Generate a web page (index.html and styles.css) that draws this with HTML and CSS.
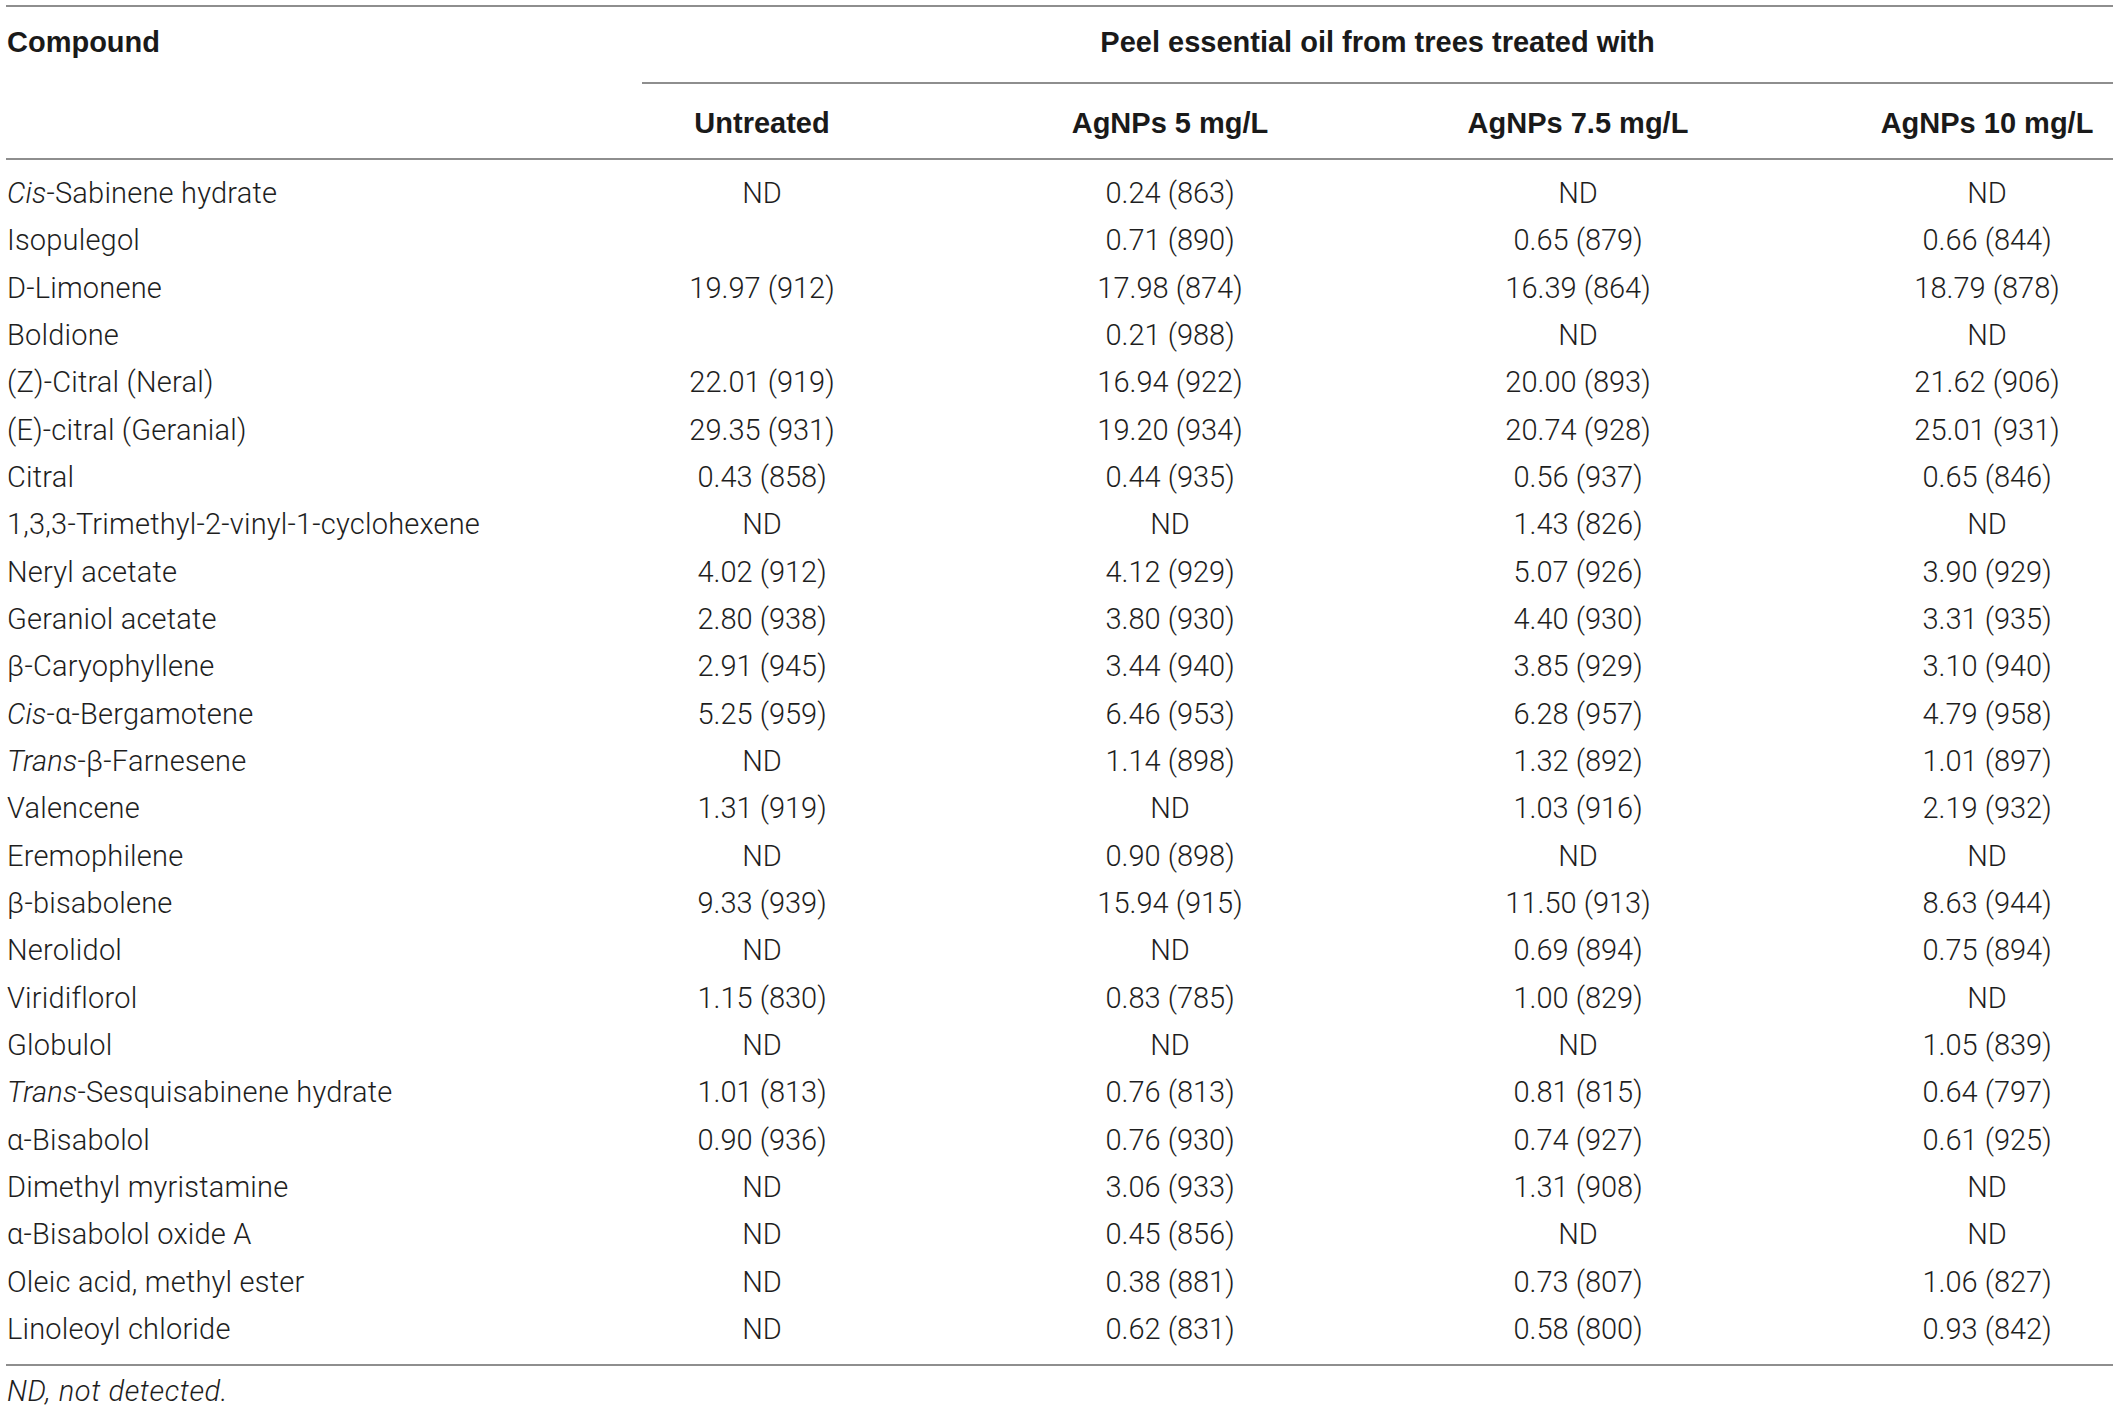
FILE: index.html
```html
<!DOCTYPE html>
<html lang="en">
<head>
<meta charset="utf-8">
<title>Peel essential oil composition</title>
<link rel="stylesheet" href="styles.css">
</head>
<body>
<div class="wrap">
<table class="data">
  <colgroup>
    <col class="c-name">
    <col class="c-val">
    <col class="c-val">
    <col class="c-val">
    <col class="c-last">
  </colgroup>
  <thead>
    <tr class="h1">
      <th class="name">Compound</th>
      <th colspan="4" class="span"><div class="span-title">Peel essential oil from trees treated with</div></th>
    </tr>
    <tr class="h2">
      <th class="name"></th>
      <th>Untreated</th>
      <th>AgNPs 5 mg/L</th>
      <th>AgNPs 7.5 mg/L</th>
      <th class="last">AgNPs 10 mg/L</th>
    </tr>
  </thead>
  <tbody>
    <tr><td class="name"><i>Cis</i>-Sabinene hydrate</td><td>ND</td><td>0.24 (863)</td><td>ND</td><td class="last">ND</td></tr>
    <tr><td class="name">Isopulegol</td><td></td><td>0.71 (890)</td><td>0.65 (879)</td><td class="last">0.66 (844)</td></tr>
    <tr><td class="name">D-Limonene</td><td>19.97 (912)</td><td>17.98 (874)</td><td>16.39 (864)</td><td class="last">18.79 (878)</td></tr>
    <tr><td class="name">Boldione</td><td></td><td>0.21 (988)</td><td>ND</td><td class="last">ND</td></tr>
    <tr><td class="name">(Z)-Citral (Neral)</td><td>22.01 (919)</td><td>16.94 (922)</td><td>20.00 (893)</td><td class="last">21.62 (906)</td></tr>
    <tr><td class="name">(E)-citral (Geranial)</td><td>29.35 (931)</td><td>19.20 (934)</td><td>20.74 (928)</td><td class="last">25.01 (931)</td></tr>
    <tr><td class="name">Citral</td><td>0.43 (858)</td><td>0.44 (935)</td><td>0.56 (937)</td><td class="last">0.65 (846)</td></tr>
    <tr><td class="name">1,3,3-Trimethyl-2-vinyl-1-cyclohexene</td><td>ND</td><td>ND</td><td>1.43 (826)</td><td class="last">ND</td></tr>
    <tr><td class="name">Neryl acetate</td><td>4.02 (912)</td><td>4.12 (929)</td><td>5.07 (926)</td><td class="last">3.90 (929)</td></tr>
    <tr><td class="name">Geraniol acetate</td><td>2.80 (938)</td><td>3.80 (930)</td><td>4.40 (930)</td><td class="last">3.31 (935)</td></tr>
    <tr><td class="name">β-Caryophyllene</td><td>2.91 (945)</td><td>3.44 (940)</td><td>3.85 (929)</td><td class="last">3.10 (940)</td></tr>
    <tr><td class="name"><i>Cis</i>-α-Bergamotene</td><td>5.25 (959)</td><td>6.46 (953)</td><td>6.28 (957)</td><td class="last">4.79 (958)</td></tr>
    <tr><td class="name"><i>Trans</i>-β-Farnesene</td><td>ND</td><td>1.14 (898)</td><td>1.32 (892)</td><td class="last">1.01 (897)</td></tr>
    <tr><td class="name">Valencene</td><td>1.31 (919)</td><td>ND</td><td>1.03 (916)</td><td class="last">2.19 (932)</td></tr>
    <tr><td class="name">Eremophilene</td><td>ND</td><td>0.90 (898)</td><td>ND</td><td class="last">ND</td></tr>
    <tr><td class="name">β-bisabolene</td><td>9.33 (939)</td><td>15.94 (915)</td><td>11.50 (913)</td><td class="last">8.63 (944)</td></tr>
    <tr><td class="name">Nerolidol</td><td>ND</td><td>ND</td><td>0.69 (894)</td><td class="last">0.75 (894)</td></tr>
    <tr><td class="name">Viridiflorol</td><td>1.15 (830)</td><td>0.83 (785)</td><td>1.00 (829)</td><td class="last">ND</td></tr>
    <tr><td class="name">Globulol</td><td>ND</td><td>ND</td><td>ND</td><td class="last">1.05 (839)</td></tr>
    <tr><td class="name"><i>Trans</i>-Sesquisabinene hydrate</td><td>1.01 (813)</td><td>0.76 (813)</td><td>0.81 (815)</td><td class="last">0.64 (797)</td></tr>
    <tr><td class="name">α-Bisabolol</td><td>0.90 (936)</td><td>0.76 (930)</td><td>0.74 (927)</td><td class="last">0.61 (925)</td></tr>
    <tr><td class="name">Dimethyl myristamine</td><td>ND</td><td>3.06 (933)</td><td>1.31 (908)</td><td class="last">ND</td></tr>
    <tr><td class="name">α-Bisabolol oxide A</td><td>ND</td><td>0.45 (856)</td><td>ND</td><td class="last">ND</td></tr>
    <tr><td class="name">Oleic acid, methyl ester</td><td>ND</td><td>0.38 (881)</td><td>0.73 (807)</td><td class="last">1.06 (827)</td></tr>
    <tr><td class="name">Linoleoyl chloride</td><td>ND</td><td>0.62 (831)</td><td>0.58 (800)</td><td class="last">0.93 (842)</td></tr>
  </tbody>
</table>
<p class="note">ND, not detected.</p>
</div>
</body>
</html>
```

FILE: styles.css
```css
html, body {
  margin: 0;
  padding: 0;
  background: #ffffff;
}

.wrap {
  padding: 5px 5px 0 6px;
}

.data {
  width: 2107px;
  table-layout: fixed;
  border-collapse: collapse;
  border-spacing: 0;
  border-top: 2px solid #8e8e8e;
  color: #1e1e1e;
  font-family: Roboto, "Liberation Sans", Arial, sans-serif;
  font-weight: 300;
  font-size: 29px;
}

.c-name { width: 552px; }
.c-val { width: 408px; }
.c-last { width: 331px; }

th {
  font-family: "Liberation Sans", Arial, sans-serif;
  font-weight: 700;
  font-size: 29px;
  line-height: 34px;
  vertical-align: top;
  text-align: center;
  padding: 0;
  color: #1a1a1a;
}

.h1 th.name {
  padding: 18px 1px 23px;
  text-align: left;
}

.h1 th.span {
  padding: 0 0 0 84px;
}

.span-title {
  padding: 18px 0 23px;
  border-bottom: 2px solid #8e8e8e;
}

.h2 th {
  padding: 22px 0 18px;
  border-bottom: 2px solid #8e8e8e;
}

.h2 th.last,
td.last {
  padding-left: 79px;
}

td {
  line-height: 33.33px;
  padding: 7px 0;
  text-align: center;
  vertical-align: top;
  white-space: nowrap;
}

td.name {
  text-align: left;
  padding-left: 1px;
  letter-spacing: 0.2px;
}

tbody tr:first-child td {
  padding-top: 17px;
}

tbody tr:last-child td {
  padding-bottom: 18px;
  border-bottom: 2px solid #8e8e8e;
}

.note {
  margin: 8px 0 0 1px;
  font-family: Roboto, "Liberation Sans", Arial, sans-serif;
  font-weight: 300;
  font-style: italic;
  font-size: 29px;
  letter-spacing: 0.6px;
  line-height: 34px;
  color: #1e1e1e;
}
```
